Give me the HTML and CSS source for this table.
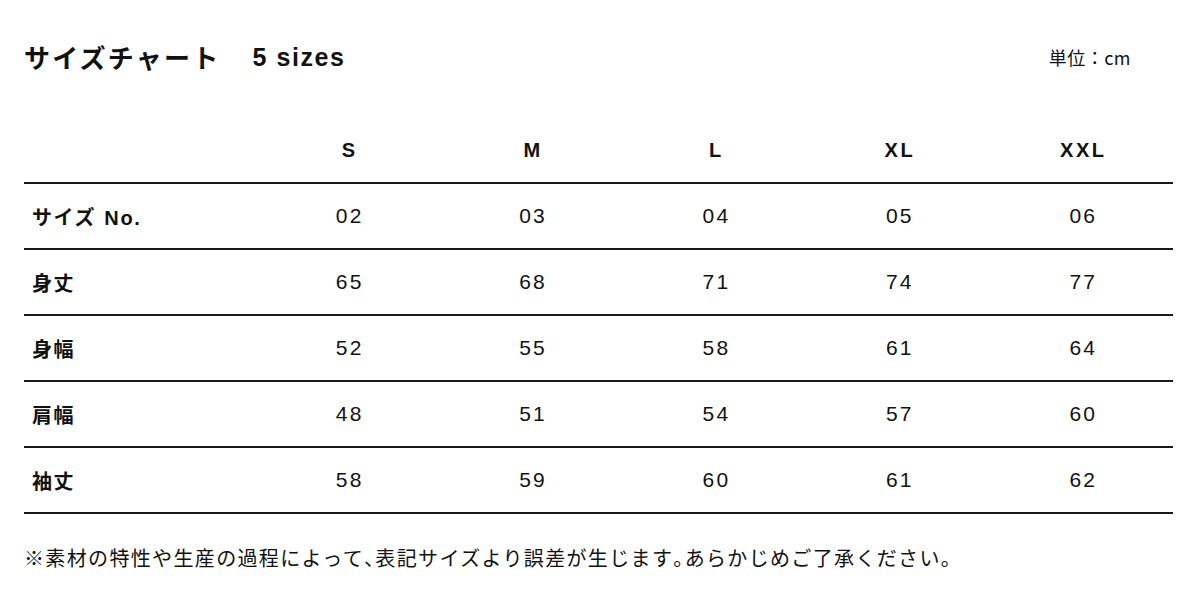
FILE: index.html
```html
<!DOCTYPE html>
<html lang="ja">
<head>
<meta charset="utf-8">
<title>サイズチャート</title>
<link rel="stylesheet" href="styles.css">
</head>
<body>
<div class="page">
  <div class="head">
    <h1 class="title"><span class="title-jp">サイズチャート</span><span class="title-en">5 sizes</span></h1>
    <div class="unit">単位：cm</div>
  </div>
  <table class="chart">
    <thead>
      <tr>
        <th class="label"></th>
        <th>S</th><th>M</th><th>L</th><th>XL</th><th>XXL</th>
      </tr>
    </thead>
    <tbody>
      <tr><th class="label">サイズ No.</th><td>02</td><td>03</td><td>04</td><td>05</td><td>06</td></tr>
      <tr><th class="label">身丈</th><td>65</td><td>68</td><td>71</td><td>74</td><td>77</td></tr>
      <tr><th class="label">身幅</th><td>52</td><td>55</td><td>58</td><td>61</td><td>64</td></tr>
      <tr><th class="label">肩幅</th><td>48</td><td>51</td><td>54</td><td>57</td><td>60</td></tr>
      <tr><th class="label">袖丈</th><td>58</td><td>59</td><td>60</td><td>61</td><td>62</td></tr>
    </tbody>
  </table>
  <p class="note">※素材の特性や生産の過程によって<span class="punct">、</span>表記サイズより誤差が生じます<span class="punct">。</span>あらかじめご了承ください<span class="punct">。</span></p>
</div>
</body>
</html>
```

FILE: styles.css
```css
html, body {
  margin: 0;
  padding: 0;
  background: #fff;
}
body {
  font-family: "Liberation Sans", "Noto Sans CJK JP", sans-serif;
  color: #111;
}
.page {
  width: 1149px;
  margin-left: 24px;
  padding-top: 40px;
}
.head {
  display: flex;
  justify-content: space-between;
  align-items: center;
  height: 34px;
}
.title {
  margin: 0;
  font-size: 26px;
  font-weight: 700;
  display: flex;
  align-items: center;
  line-height: 34px;
}
.title-jp {
  font-family: "Noto Sans CJK JP", sans-serif;
  letter-spacing: 2.2px;
}
.title-en {
  margin-left: 32px;
  font-size: 25px;
  letter-spacing: 1.6px;
}
.unit {
  font-size: 18px;
  letter-spacing: 0.5px;
  margin-right: 42px;
  font-family: "Noto Sans CJK JP", sans-serif;
}
.chart {
  margin-top: 44px;
  width: 1149px;
  border-collapse: collapse;
  table-layout: fixed;
}
.chart th, .chart td {
  padding: 0;
  text-align: center;
}
.chart thead th {
  height: 64px;
  font-size: 20px;
  font-weight: 700;
  letter-spacing: 2.5px;
  border-bottom: 2px solid #1a1a1a;
  padding-left: 4px;
}
.chart th.label {
  width: 232px;
  text-align: left;
  padding-left: 8px;
  box-sizing: border-box;
}
.chart tbody th.label {
  font-size: 20px;
  font-weight: 700;
  letter-spacing: 1.6px;
  word-spacing: 1px;
}
.chart tbody tr {
  height: 66px;
}
.chart tbody th, .chart tbody td {
  border-bottom: 2px solid #1a1a1a;
  height: 64px;
}
.chart td {
  font-size: 21px;
  letter-spacing: 2.2px;
  padding-left: 4px;
}
.note {
  margin: 30px 0 0 0;
  font-family: "Noto Sans CJK JP", sans-serif;
  font-size: 20px;
  letter-spacing: 1.35px;
  line-height: 28px;
}
.punct {
  font-feature-settings: "halt";
}
```
